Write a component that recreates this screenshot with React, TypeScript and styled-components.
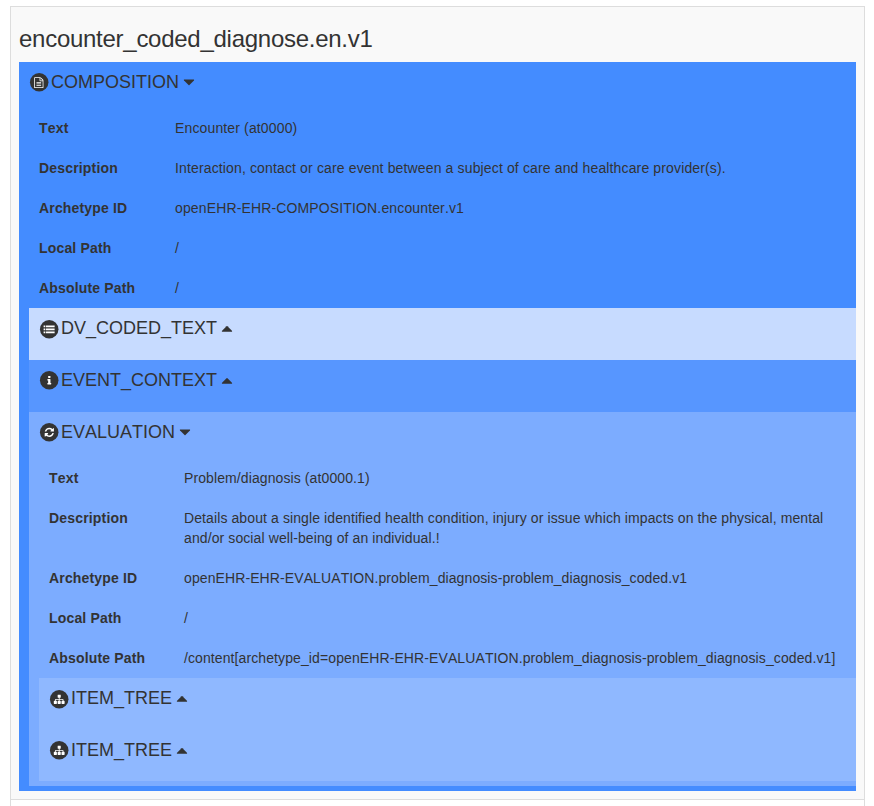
import React from "react";
import styled, { createGlobalStyle } from "styled-components";

const GlobalStyle = createGlobalStyle`
  *, *::before, *::after { box-sizing: border-box; }
  body {
    margin: 0;
    background: #fff;
    color: #333;
    font: 14px/20px "Liberation Sans", Arial, Helvetica, sans-serif;
    font-kerning: none;
    overflow: hidden;
  }
`;

const Page = styled.main`
  height: 806px;
  padding: 6px 9px 0 10px;
  display: flex;
  flex-direction: column;
`;

const Cell = styled.section`
  height: 794px;
  flex: none;
  padding: 18px 8px 0;
  border: 1px solid #ddd;
  background: #f9f9f9;
`;

const NextCell = styled.section`
  flex: 1;
  border: solid #ddd;
  border-width: 0 1px;
`;

const Title = styled.h3`
  margin: 0;
  height: 37px;
  font-size: 24px;
  line-height: 27px;
  font-weight: 400;
  letter-spacing: -0.27px;
`;

const Node = styled.div<{ $color: string; $last?: boolean }>`
  background: ${(p) => p.$color};
  padding-left: 10px;
  padding-bottom: ${(p) => (p.$last ? 5 : 0)}px;
`;

const Heading = styled.h4<{ $height: number }>`
  display: flex;
  align-items: flex-start;
  margin: 0;
  height: ${(p) => p.$height}px;
  padding-top: 10px;
  font-size: 18px;
  line-height: 20px;
  font-weight: 400;
`;

const Badge = styled.svg<{ $low?: boolean }>`
  width: 22px;
  height: 22px;
  flex: none;
  margin-top: ${(p) => (p.$low ? 0 : -1)}px;
`;

const Caret = styled.svg<{ $open?: boolean }>`
  width: 18px;
  height: 18px;
  flex: none;
  margin: ${(p) => (p.$open ? 0.5 : 0.8)}px 0 0 1px;
`;

const Fields = styled.dl<{ $labelWidth: number; $tracking: number }>`
  margin: 0;
  padding: 0 10px;
  display: grid;
  grid-template-columns: ${(p) => p.$labelWidth}px 1fr;
  letter-spacing: ${(p) => p.$tracking}px;
`;

const Label = styled.dt`
  padding: 10px 0;
  font-weight: 700;
  letter-spacing: 0.17px;
`;

const Value = styled.dd`
  margin: 0;
  padding: 10px 0;
`;

type Glyph = "file" | "list" | "info" | "refresh" | "sitemap";

const glyphs: Record<Glyph, string> = {
  file: "M1596 380q28 28 48 76t20 88v1152q0 40-28 68t-68 28h-1344q-40 0-68-28t-28-68v-1600q0-40 28-68t68-28h896q40 0 88 20t76 48zm-444-244v376h376q-10-29-22-41l-313-313q-12-12-41-22zm384 1528v-1024h-416q-40 0-68-28t-28-68v-416h-768v1536h1280zM512 768h768v128H512zM512 1024h768v128H512zM512 1280h768v128H512z",
  list: "M0 256h290v280H0zM400 256h1430v280H400zM0 753h290v280H0zM400 753h1430v280H400zM0 1250h290v280H0zM400 1250h1430v280H400z",
  info: "M1216 1344v128q0 26-19 45t-45 19h-512q-26 0-45-19t-19-45v-128q0-26 19-45t45-19h64v-384h-64q-26 0-45-19t-19-45v-128q0-26 19-45t45-19h384q26 0 45 19t19 45v576h64q26 0 45 19t19 45zm-128-1152v192q0 26-19 45t-45 19h-256q-26 0-45-19t-19-45v-192q0-26 19-45t45-19h256q26 0 45 19t19 45z",
  refresh: "M1639 1056q0 5-1 7-64 268-268 434.5t-478 166.5q-146 0-282.5-55t-243.5-157l-129 129q-19 19-45 19t-45-19-19-45v-448q0-26 19-45t45-19h448q26 0 45 19t19 45-19 45l-137 137q71 66 161 102t187 36q134 0 250-65t186-179q11-17 53-117 8-23 30-23h192q13 0 22.5 9.5t9.5 22.5zm25-800v448q0 26-19 45t-45 19h-448q-26 0-45-19t-19-45 19-45l138-138q-148-137-349-137-134 0-250 65t-186 179q-11 17-53 117-8 23-30 23h-199q-13 0-22.5-9.5t-9.5-22.5v-7q65-268 270-434.5t480-166.5q146 0 284 55.5t245 156.5l130-129q19-19 45-19t45 19 19 45z",
  sitemap: "M1792 1248v320q0 40-28 68t-68 28h-320q-40 0-68-28t-28-68v-320q0-40 28-68t68-28h96v-192h-512v192h96q40 0 68 28t28 68v320q0 40-28 68t-68 28h-320q-40 0-68-28t-28-68v-320q0-40 28-68t68-28h96v-192h-512v192h96q40 0 68 28t28 68v320q0 40-28 68t-68 28h-320q-40 0-68-28t-28-68v-320q0-40 28-68t68-28h96v-192q0-52 38-90t90-38h512v-192h-96q-40 0-68-28t-28-68v-320q0-40 28-68t68-28h320q40 0 68 28t28 68v320q0 40-28 68t-68 28h-96v192h512q52 0 90 38t38 90v192h96q40 0 68 28t28 68z",
};

const glyphOrigins: Record<Glyph, string> = {
  file: "4.4 6.3",
  list: "4.6 6",
  info: "4.9 6.2",
  refresh: "4.9 5.9",
  sitemap: "4.8 5.9",
};

const carets = {
  down: "M1408 704q0 26-19 45l-448 448q-19 19-45 19t-45-19l-448-448q-19-19-19-45t19-45 45-19h896q26 0 45 19t19 45z",
  up: "M1408 1216q0 26-19 45t-45 19h-896q-26 0-45-19t-19-45 19-45l448-448q19-19 45-19t45 19l448 448q19 19 19 45z",
};

interface NodeHeadingProps {
  icon: Glyph;
  name: string;
  open?: boolean;
  low?: boolean;
  height?: number;
}

function NodeHeading({ icon, name, open, low, height = open ? 46 : 52 }: NodeHeadingProps) {
  return (
    <Heading $height={height}>
      <Badge $low={low} viewBox="0 0 22 22" aria-hidden="true">
        <circle cx="10.2" cy="11.2" r="9.25" fill="#333" />
        <path
          d={glyphs[icon]}
          fill="#fff"
          fillRule={icon === "file" ? "evenodd" : "nonzero"}
          transform={`translate(${glyphOrigins[icon]}) scale(0.00603)`}
        />
      </Badge>
      {name}
      <Caret $open={open} viewBox="0 0 1792 1792" aria-hidden="true">
        <path fill="#333" d={open ? carets.down : carets.up} />
      </Caret>
    </Heading>
  );
}

interface FieldListProps {
  rows: [string, string][];
  labelWidth: number;
  tracking: number;
}

function FieldList({ rows, labelWidth, tracking }: FieldListProps) {
  return (
    <Fields $labelWidth={labelWidth} $tracking={tracking}>
      {rows.map(([label, value]) => (
        <React.Fragment key={label}>
          <Label>{label}</Label>
          <Value>{value}</Value>
        </React.Fragment>
      ))}
    </Fields>
  );
}

const compositionRows: [string, string][] = [
  ["Text", "Encounter (at0000)"],
  ["Description", "Interaction, contact or care event between a subject of care and healthcare provider(s)."],
  ["Archetype ID", "openEHR-EHR-COMPOSITION.encounter.v1"],
  ["Local Path", "/"],
  ["Absolute Path", "/"],
];

const evaluationRows: [string, string][] = [
  ["Text", "Problem/diagnosis (at0000.1)"],
  ["Description", "Details about a single identified health condition, injury or issue which impacts on the physical, mental and/or social well-being of an individual.!"],
  ["Archetype ID", "openEHR-EHR-EVALUATION.problem_diagnosis-problem_diagnosis_coded.v1"],
  ["Local Path", "/"],
  ["Absolute Path", "/content[archetype_id=openEHR-EHR-EVALUATION.problem_diagnosis-problem_diagnosis_coded.v1]"],
];

export default function App() {
  return (
    <Page>
      <GlobalStyle />
      <Cell>
        <Title>encounter_coded_diagnose.en.v1</Title>
        <Node $color="#448cff" $last>
          <NodeHeading icon="file" name="COMPOSITION" open />
          <FieldList rows={compositionRows} labelWidth={136} tracking={0.14} />
          <Node $color="#c7dbff">
            <NodeHeading icon="list" name="DV_CODED_TEXT" low />
          </Node>
          <Node $color="#5796ff">
            <NodeHeading icon="info" name="EVENT_CONTEXT" />
          </Node>
          <Node $color="#7cacff" $last>
            <NodeHeading icon="refresh" name="EVALUATION" open />
            <FieldList rows={evaluationRows} labelWidth={135} tracking={0.1} />
            <Node $color="#8fb8ff">
              <NodeHeading icon="sitemap" name="ITEM_TREE" low />
              <NodeHeading icon="sitemap" name="ITEM_TREE" height={51} />
            </Node>
          </Node>
        </Node>
      </Cell>
      <NextCell />
    </Page>
  );
}
